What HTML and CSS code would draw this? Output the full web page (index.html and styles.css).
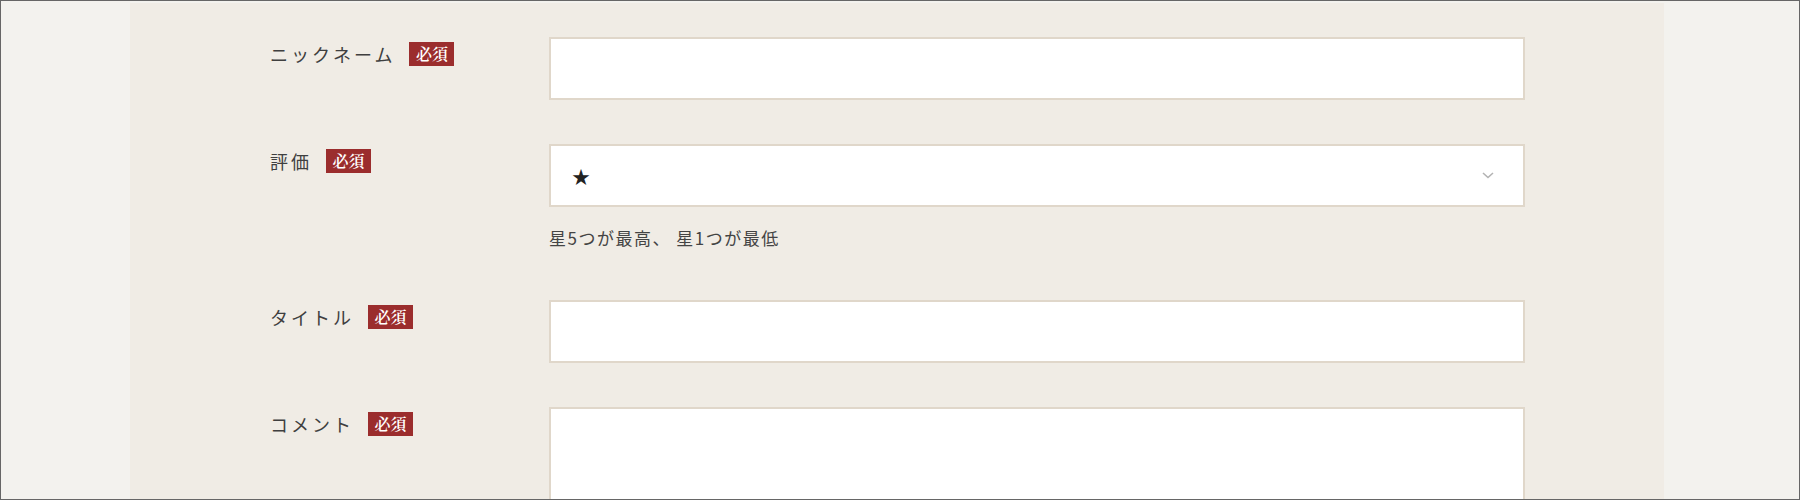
FILE: index.html
```html
<!DOCTYPE html>
<html lang="ja">
<head>
<meta charset="utf-8">
<title>レビュー投稿</title>
<link rel="stylesheet" href="styles.css">
</head>
<body>
<div class="frame">
  <main class="panel">
    <form class="review-form">
      <div class="field-label"><span class="label-text">ニックネーム</span><span class="req">必須</span></div>
      <div class="field-control"><input class="text-input" type="text"></div>

      <div class="field-label"><span class="label-text">評価</span><span class="req">必須</span></div>
      <div class="field-control">
        <div class="select-box"><span class="star">★</span>
          <svg class="chevron" width="12" height="7" viewBox="0 0 12 7"><path d="M1 1 L6 5.5 L11 1" fill="none" stroke="#b3b3b3" stroke-width="1.6"/></svg>
        </div>
        <p class="help">星5つが最高、 星1つが最低</p>
      </div>

      <div class="field-label"><span class="label-text">タイトル</span><span class="req">必須</span></div>
      <div class="field-control"><input class="text-input" type="text"></div>

      <div class="field-label"><span class="label-text">コメント</span><span class="req">必須</span></div>
      <div class="field-control"><textarea class="text-area"></textarea></div>
    </form>
  </main>
</div>
</body>
</html>
```
FILE: styles.css
```css
* { box-sizing: border-box; }
html, body { margin: 0; padding: 0; }
body {
  font-family: "Noto Sans CJK JP", "Noto Sans", sans-serif;
  color: #3c3c3c;
}
.frame {
  width: 1800px;
  height: 500px;
  border: 1px solid #666;
  background: #f3f2ee;
  overflow: hidden;
  padding-top: 2px;
}
.panel {
  width: 1534px;
  height: 600px;
  margin-left: 129px;
  background: #f0ece5;
  padding: 34px 139px 0 140px;
}
.review-form {
  display: grid;
  grid-template-columns: 279px 976px;
  row-gap: 44px;
}
.field-label {
  display: flex;
  align-items: center;
  height: 26px;
  margin-top: 4px;
}
.label-text {
  font-size: 18px;
  letter-spacing: 3px;
  line-height: 26px;
  color: #3f3f3f;
}
.req {
  margin-left: 14px;
  width: 45px;
  height: 24px;
  background: #9b2d2d;
  color: #fff;
  font-family: "Noto Serif CJK JP", "Noto Sans CJK JP", serif;
  font-size: 16px;
  font-weight: 600;
  line-height: 24px;
  text-align: center;
}
.text-input, .select-box, .text-area {
  display: block;
  width: 976px;
  height: 63px;
  border: 2px solid #e0d7ca;
  background: #fff;
  margin: 0;
  font: inherit;
}
.select-box {
  display: flex;
  align-items: center;
  justify-content: space-between;
  padding: 0 29px 0 21px;
}
.star {
  font-size: 18px;
  color: #222;
  line-height: 1;
}
.chevron { display: block; }
.help {
  margin: 17px 0 0;
  padding-bottom: 4px;
  font-size: 17px;
  line-height: 28px;
  letter-spacing: 1.5px;
  color: #444;
}
.text-area {
  height: 200px;
  resize: none;
}
```
